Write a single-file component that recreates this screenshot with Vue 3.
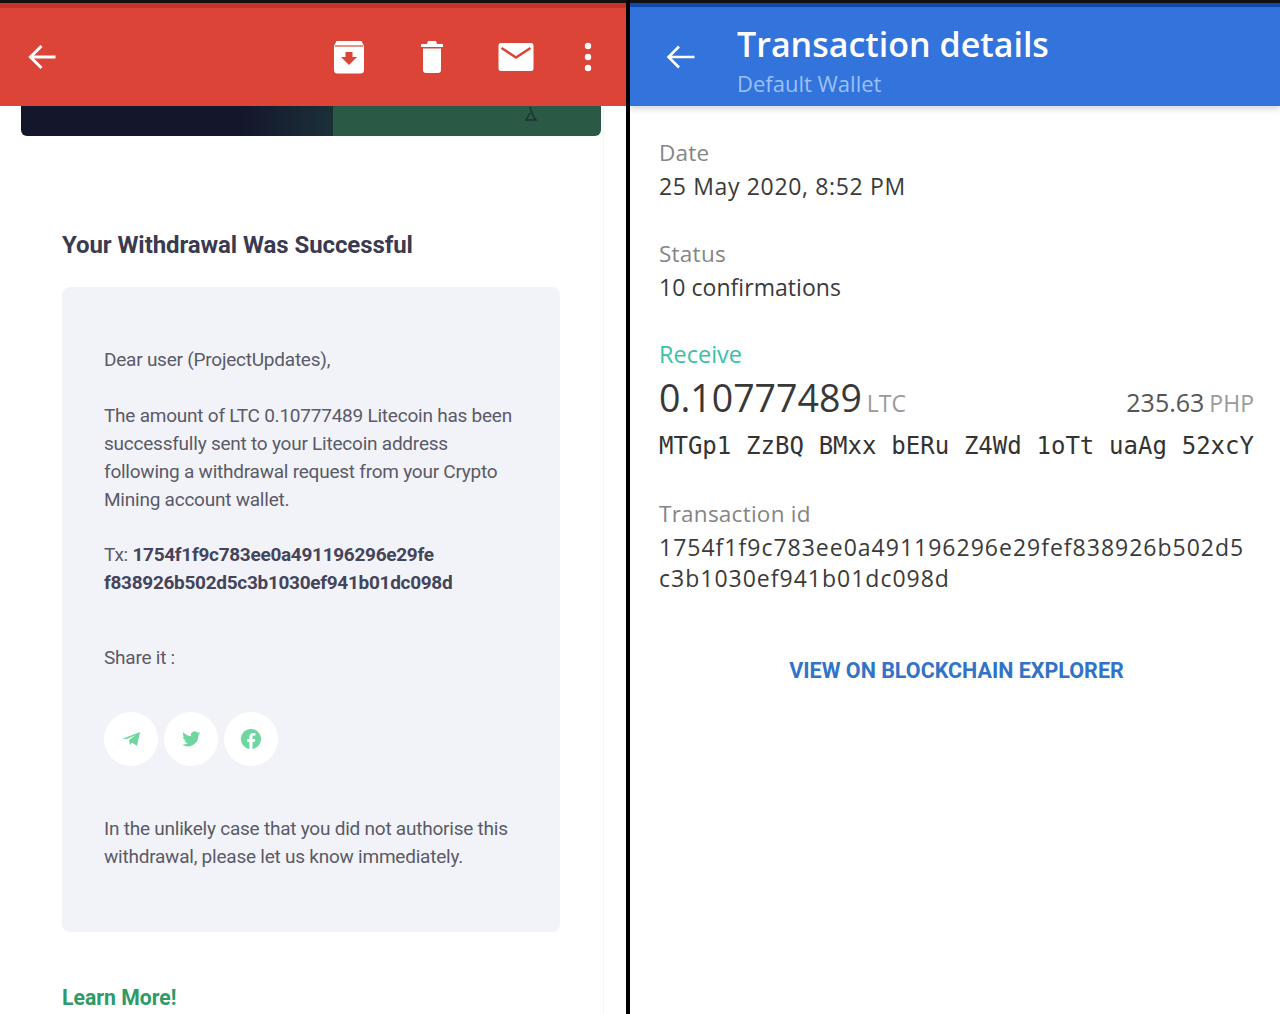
<template>
  <div class="screen">
    <section class="mail">
      <header class="mail-bar">
        <svg class="back" viewBox="0 0 30 30" width="30" height="30">
          <path d="M28.500 15H4M14.500 4 3.500 15 14.500 26" fill="none" stroke="#fff" stroke-width="3" />
        </svg>
        <div class="mail-actions">
          <svg viewBox="0 0 32 34" width="32" height="34">
            <path d="M1 6 3.500 1h25L31 6v24a3.500 3.500 0 0 1-3.500 3.500h-23A3.500 3.500 0 0 1 1 30z" fill="#fff" />
            <path d="M2 6h28" stroke="#dc4437" stroke-width="1.200" />
            <path d="M12.500 12h7v5h4.500L16 25 8 17h4.500z" fill="#dc4437" />
          </svg>
          <svg viewBox="0 0 24 34" width="24" height="34">
            <path d="M1 4h22v3H1zM8 1h8l1 3H7z" fill="#fff" />
            <path d="M3 8.500h18V30a3 3 0 0 1-3 3H6a3 3 0 0 1-3-3z" fill="#fff" />
          </svg>
          <svg viewBox="0 0 36 30" width="36" height="30">
            <path d="M3 1h30a2.500 2.500 0 0 1 2.500 2.500v23A2.500 2.500 0 0 1 33 29H3a2.500 2.500 0 0 1-2.500-2.500v-23A2.500 2.500 0 0 1 3 1z" fill="#fff" />
            <path d="M3.500 6 18 15.500 32.500 6" fill="none" stroke="#dc4437" stroke-width="2.500" />
          </svg>
          <svg class="dots" viewBox="0 0 8 30" width="8" height="30">
            <circle cx="4" cy="4" r="3.200" fill="#fff" />
            <circle cx="4" cy="15" r="3.200" fill="#fff" />
            <circle cx="4" cy="26" r="3.200" fill="#fff" />
          </svg>
        </div>
      </header>

      <div class="mail-body">
        <div class="banner">
          <div class="banner-dark"></div>
          <div class="banner-green">
            <svg viewBox="0 0 16 16" width="16" height="16">
              <path d="M7 1c1 4 2 8 6 13H3l4-7" fill="none" stroke="#1c3534" stroke-width="1.500" />
            </svg>
          </div>
        </div>

        <h1>Your Withdrawal Was Successful</h1>

        <div class="card">
          <p class="dear">Dear user (ProjectUpdates),</p>
          <p class="amount">The amount of LTC 0.10777489 Litecoin has been<br>successfully sent to your Litecoin address<br>following a withdrawal request from your Crypto<br>Mining account wallet.</p>
          <p class="tx">Tx: <b>1754f1f9c783ee0a491196296e29fe<br>f838926b502d5c3b1030ef941b01dc098d</b></p>
          <p class="share">Share it :</p>
          <div class="socials">
            <span class="social">
              <svg viewBox="0 0 20 20" width="20" height="20">
                <path d="M1 10 19 3l-3 14-5-3.500-2 2.500-1-5 7-5-9 4z" fill="#6fd6a0" />
              </svg>
            </span>
            <span class="social">
              <svg viewBox="0 0 24 24" width="22" height="22">
                <path d="M22 5.800c-.7.300-1.500.500-2.300.6.800-.5 1.500-1.300 1.800-2.200-.8.500-1.700.8-2.600 1a4 4 0 0 0-6.900 3.700C8.700 8.700 5.700 7 3.700 4.600c-1 1.800-.5 4.100 1.300 5.300-.7 0-1.300-.2-1.800-.5 0 2 1.400 3.700 3.300 4.100-.6.200-1.200.2-1.800.1.500 1.600 2 2.800 3.800 2.800A8.300 8.300 0 0 1 2 18.100 11.600 11.600 0 0 0 20 7.800c.8-.5 1.500-1.200 2-2z" fill="#6fd6a0" />
              </svg>
            </span>
            <span class="social">
              <svg viewBox="0 0 22 22" width="22" height="22">
                <path d="M11 1a10 10 0 0 0-1.600 19.900v-7H7V11h2.400V8.800c0-2.500 1.500-3.900 3.800-3.900l2.200.2v2.500h-1.300c-1.200 0-1.600.8-1.600 1.600V11h2.800l-.5 2.900h-2.300v7A10 10 0 0 0 11 1z" fill="#6fd6a0" />
              </svg>
            </span>
          </div>
          <p class="unlikely">In the unlikely case that you did not authorise this<br>withdrawal, please let us know immediately.</p>
        </div>

        <a class="learn">Learn More!</a>
      </div>
    </section>

    <section class="wallet">
      <header class="wallet-bar">
        <svg class="wallet-back" viewBox="0 0 30 26" width="30" height="26">
          <path d="M28.500 13H3M13 2.500 2.500 13 13 23.500" fill="none" stroke="#fff" stroke-width="2.600" />
        </svg>
        <div>
          <div class="wallet-title">Transaction details</div>
          <div class="wallet-sub">Default Wallet</div>
        </div>
      </header>

      <div class="wallet-body">
        <div class="field date">
          <div class="label">Date</div>
          <div class="value date-value">25 May 2020, 8:52 PM</div>
        </div>
        <div class="field status">
          <div class="label">Status</div>
          <div class="value">10 confirmations</div>
        </div>
        <div class="receive">Receive</div>
        <div class="amounts">
          <div><span class="coin">0.10777489</span><span class="unit">LTC</span></div>
          <div><span class="fiat">235.63</span><span class="fiat-unit">PHP</span></div>
        </div>
        <div class="address">
          <span v-for="part in addressParts" :key="part">{{ part }}</span>
        </div>
        <div class="field txid">
          <div class="label">Transaction id</div>
          <div class="value hash">1754f1f9c783ee0a491196296e29fef838926b502d5<br>c3b1030ef941b01dc098d</div>
        </div>
        <a class="explorer">VIEW ON BLOCKCHAIN EXPLORER</a>
      </div>
    </section>
  </div>
</template>

<script setup>
const addressParts = ['MTGp1', 'ZzBQ', 'BMxx', 'bERu', 'Z4Wd', '1oTt', 'uaAg', '52xcY']
</script>

<style>
html, body {
  margin: 0;
  background: #fff;
}
</style>

<style scoped>
.screen {
  display: flex;
  width: 1280px;
  height: 1014px;
  overflow: hidden;
  background: #000;
}

.mail {
  width: 626px;
  background: #fff;
  font-family: Roboto, "Liberation Sans", sans-serif;
}

.mail-bar {
  position: relative;
  z-index: 1;
  display: flex;
  align-items: center;
  justify-content: space-between;
  box-sizing: border-box;
  height: 106px;
  padding: 5px 34px 0 27px;
  background: #dc4437;
  border-top: 3px solid #111;
  box-shadow: inset 0 5px 0 #c5332a;
}

.mail-actions {
  display: flex;
  align-items: center;
}

.mail-actions svg:nth-child(1) { margin-right: 55px; }
.mail-actions svg:nth-child(2) { margin-right: 54px; }
.mail-actions svg:nth-child(3) { margin-right: 50px; }

.mail-body {
  box-sizing: border-box;
  height: 908px;
  width: 604px;
  border-right: 1px solid #f6f6f8;
  padding-left: 21px;
}

.banner {
  display: flex;
  width: 580px;
  height: 30px;
  border-radius: 0 0 6px 6px;
  overflow: hidden;
}

.banner-dark {
  width: 312px;
  background: linear-gradient(90deg, #14162c 0, #14162c 70%, #1b3038 100%);
}

.banner-green {
  flex: 1;
  display: flex;
  justify-content: flex-end;
  background: #2a5a46;
  padding-right: 62px;
}

h1 {
  margin: 94px 0 0 41px;
  font-size: 24px;
  line-height: 30px;
  font-weight: 700;
  color: #3a3a50;
  letter-spacing: -0.080px;
}

.card {
  box-sizing: border-box;
  width: 498px;
  height: 645px;
  margin: 27px 0 0 41px;
  padding: 59px 0 0 42px;
  background: #f2f3f8;
  border-radius: 8px;
  color: #5a5a68;
  font-size: 19px;
  line-height: 28px;
  letter-spacing: -0.230px;
}

.card p {
  margin: 0;
  white-space: nowrap;
}

.amount { padding-top: 28px; }
.tx { padding-top: 27px; }

.tx b {
  font-weight: 700;
  color: #44445a;
  letter-spacing: -0.300px;
}

.share { padding-top: 47px; }

.socials {
  display: flex;
  gap: 6px;
  margin-top: 40px;
}

.social {
  display: flex;
  align-items: center;
  justify-content: center;
  width: 54px;
  height: 54px;
  border-radius: 50%;
  background: #fff;
}

.unlikely { padding-top: 49px; }

.learn {
  display: block;
  margin: 52px 0 0 41px;
  color: #2e9a68;
  font-size: 21.200px;
  line-height: 28px;
  font-weight: 700;
}

.wallet {
  width: 650px;
  margin-left: 4px;
  background: #fff;
  font-family: "Open Sans", "Noto Sans", sans-serif;
}

.wallet-bar {
  display: flex;
  box-sizing: border-box;
  height: 106px;
  padding: 8px 0 0 36px;
  background: #3273dc;
  border-top: 3px solid #111;
  box-shadow: inset 0 4px 0 #0f4aa8, 0 3px 6px rgba(0, 0, 0, .16);
}

.wallet-back {
  margin: 33px 41px 0 0;
}

.wallet-title {
  margin-top: 11px;
  color: #fff;
  font-size: 34px;
  line-height: 44px;
  font-weight: 600;
}

.wallet-sub {
  margin-top: 2px;
  color: #9cc0f5;
  font-size: 22px;
  line-height: 30px;
}

.wallet-body {
  padding: 31px 26px 0 29px;
  color: #3a3a3a;
}

.field .label {
  color: #858585;
  font-size: 22.500px;
  line-height: 32px;
  letter-spacing: .25px;
}

.field .value {
  margin-top: 1px;
  font-size: 23px;
  line-height: 32px;
  letter-spacing: .05px;
}

.field .date-value { letter-spacing: .65px; }

.status { margin-top: 36px; }

.receive {
  margin-top: 35px;
  color: #3bbfa8;
  font-size: 23.500px;
  line-height: 32px;
}

.amounts {
  display: flex;
  justify-content: space-between;
  align-items: baseline;
  margin-top: 3px;
  line-height: 50px;
}

.coin {
  font-size: 37.500px;
  color: #383838;
}

.unit, .fiat-unit {
  margin-left: 5px;
  color: #9a9a9a;
  font-size: 23px;
}

.fiat {
  color: #555;
  font-size: 25px;
}

.address {
  display: flex;
  justify-content: space-between;
  margin-top: -1px;
  font-family: "DejaVu Sans Mono", "Liberation Mono", monospace;
  font-size: 24px;
  line-height: 32px;
  color: #333;
}

.txid { margin-top: 36px; }

.field .hash {
  margin-top: 2px;
  line-height: 31px;
  letter-spacing: 1px;
}

.explorer {
  display: block;
  margin-top: 62px;
  text-align: center;
  color: #3273c8;
  font-family: Roboto, "Liberation Sans", sans-serif;
  font-size: 21.500px;
  line-height: 30px;
  font-weight: 700;
}
</style>
